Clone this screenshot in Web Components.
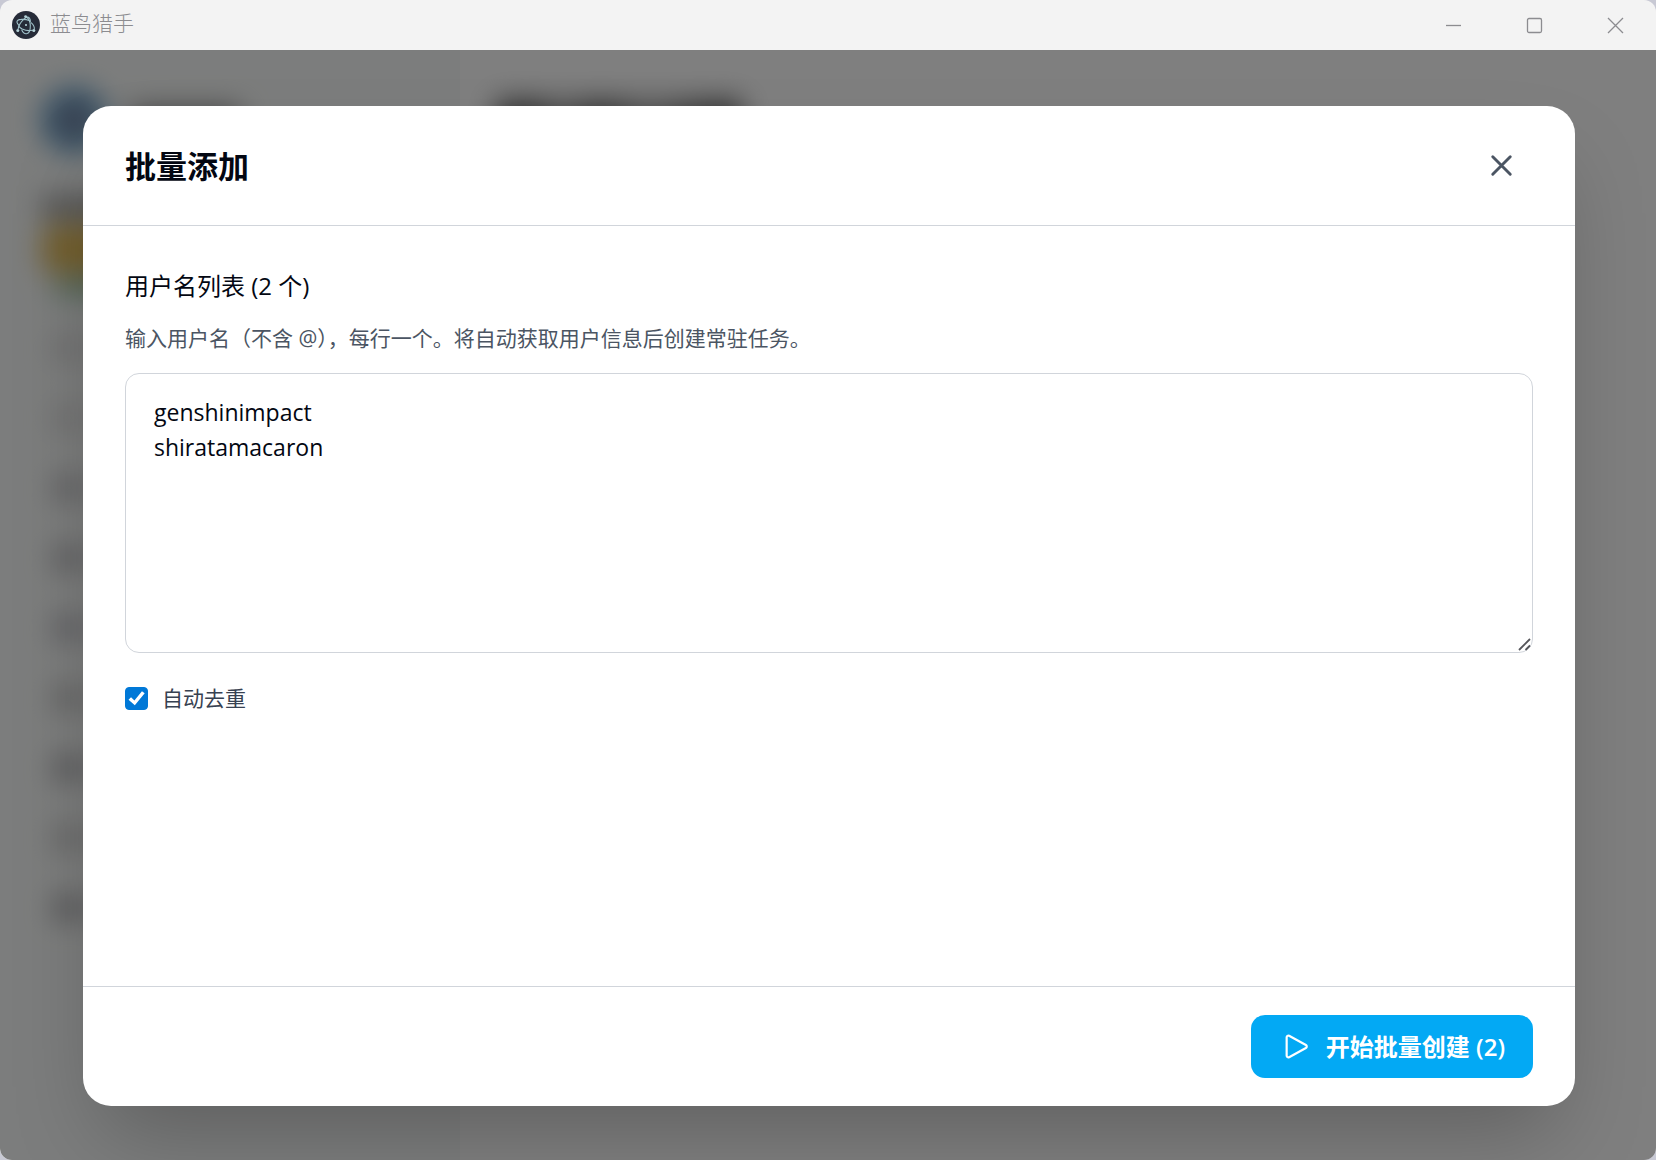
<!DOCTYPE html>
<html lang="zh-CN">
<head>
<meta charset="utf-8">
<meta name="viewport" content="width=device-width, initial-scale=1">
<title>蓝鸟猎手</title>
<style>
  html, body {
    margin: 0;
    height: 100%;
  }
  body {
    background: #c8c9d4;
    font-family: "Open Sans", "Noto Sans CJK SC", sans-serif;
    color: #030712;
  }
</style>
</head>
<body>
<app-window>
  <title-bar slot="titlebar">蓝鸟猎手</title-bar>
  <app-shell slot="shell" aria-hidden="true"></app-shell>
  <modal-dialog heading="批量添加">
    <batch-form></batch-form>
    <primary-button slot="footer">开始批量创建 (2)</primary-button>
  </modal-dialog>
</app-window>

<script>
class AppWindow extends HTMLElement {
  constructor() {
    super();
    this.attachShadow({ mode: 'open' });
    this.shadowRoot.innerHTML = `
      <style>
        :host {
          display: grid;
          grid-template-rows: 50px 1fr;
          min-height: 100vh;
          border-radius: 12px;
          overflow: hidden;
        }
        .stage {
          display: grid;
          min-height: 0;
        }
        .stage > * {
          grid-area: 1 / 1;
          display: grid;
          min-width: 0;
        }
        .backdrop {
          z-index: 1;
          box-sizing: border-box;
          padding: 56px 81px 54px 83px;
          background: rgba(0, 0, 0, 0.5);
        }
      </style>
      <slot name="titlebar"></slot>
      <div class="stage">
        <div><slot name="shell"></slot></div>
        <div class="backdrop"><slot></slot></div>
      </div>
    `;
  }
}
customElements.define('app-window', AppWindow);

class TitleBar extends HTMLElement {
  constructor() {
    super();
    this.attachShadow({ mode: 'open' });
    this.shadowRoot.innerHTML = `
      <style>
        :host {
          display: flex;
          align-items: center;
          background: #f3f3f3;
          color: #8c8c90;
          line-height: 28px;
          padding-left: 12px;
        }
        .logo {
          width: 28px;
          height: 28px;
          margin-right: 10px;
        }
        .name {
          flex: 1;
          font-size: 21px;
          font-weight: 300;
          padding-bottom: 4px;
        }
        button {
          display: grid;
          place-items: center;
          width: 81px;
          height: 50px;
          padding: 0;
          border: none;
          background: none;
          color: inherit;
        }
        button:hover { background: #e5e5e5; }
        button svg {
          width: 17px;
          height: 17px;
          fill: none;
          stroke: currentColor;
          stroke-width: 1.3;
        }
      </style>
      <svg class="logo" viewBox="0 0 28 28" aria-hidden="true">
        <circle cx="14" cy="14" r="14" fill="#262b38"/>
        <g fill="none" stroke="#9fc0c8" stroke-width="1.1" stroke-linecap="round">
          <path d="M18 9.8C15.2 8.7 12 8.2 9.2 8.4C6.3 8.5 4.6 9.6 5 11.3C5.2 12.3 5.9 13.3 7 14.4"/>
          <path d="M6.2 17.6C6.7 14.6 8.8 11 11.6 8.3C13.8 6.2 16 5.6 17.3 6.9C18.1 7.7 18.4 9 18.3 10.6"/>
          <path d="M20.4 19.2C17.6 20 13.6 19.6 10.2 18C8.8 17.3 7.6 16.4 6.8 15.4"/>
          <path d="M14.8 6.2C16.9 7.9 18.2 11 18.3 14.4C18.4 18.6 17 22.2 14.6 22.7C12.6 23 10.8 21.4 9.8 19"/>
          <path d="M22.3 18.2C22.6 16.4 21.5 14 19.4 11.9"/>
        </g>
        <g fill="#b4d2d8">
          <circle cx="14" cy="14" r="1.1"/>
          <circle cx="13.6" cy="5.6" r="1.4"/>
          <circle cx="5.8" cy="19.4" r="1.5"/>
          <circle cx="21.8" cy="19.4" r="1.5"/>
        </g>
      </svg>
      <span class="name"><slot></slot></span>
      <button type="button" aria-label="最小化">
        <svg viewBox="0 0 17 17"><path d="M1 8.5h15"/></svg>
      </button>
      <button type="button" aria-label="最大化">
        <svg viewBox="0 0 17 17"><rect x="1.5" y="1.5" width="14" height="14" rx="1.5"/></svg>
      </button>
      <button type="button" aria-label="关闭窗口">
        <svg viewBox="0 0 17 17"><path d="M1 1l15 15M16 1L1 16"/></svg>
      </button>
    `;
  }
}
customElements.define('title-bar', TitleBar);

// page behind the dialog, out of focus while the dialog is open
class AppShell extends HTMLElement {
  constructor() {
    super();
    this.attachShadow({ mode: 'open' });
    const tones = ['#d8d8d8', '#dadada', '#b8b8bc', '#b0b0b4', '#b4b4bc', '#bcbcbc', '#a4a4a8', '#c4c4c4', '#a0a0a4'];
    this.shadowRoot.innerHTML = `
      <style>
        :host {
          display: grid;
          grid-template-columns: 460px 1fr;
          background: #fff;
          overflow: hidden;
        }
        aside {
          background: #f9fbfa;
          box-sizing: border-box;
          padding: 42px 42px 0;
        }
        main { padding: 50px 36px; }
        .soft { filter: blur(14px); }
        .brand {
          display: flex;
          align-items: center;
          gap: 24px;
          height: 56px;
        }
        .brand i {
          width: 64px;
          height: 64px;
          border-radius: 32px;
          background: radial-gradient(#a88088, #4a98cc 60%);
        }
        .brand b {
          width: 110px;
          height: 24px;
          background: #888;
        }
        .caption {
          width: 90px;
          height: 20px;
          margin-top: 49px;
          background: #999;
        }
        .notice {
          height: 48px;
          margin-top: 8px;
          border-radius: 12px;
          background: #e4bc58;
        }
        .status {
          height: 16px;
          margin: 6px 0 18px 14px;
          background: #8fbe98;
        }
        .item {
          display: flex;
          align-items: center;
          gap: 14px;
          height: 70px;
          padding-left: 12px;
        }
        .item i {
          width: 28px;
          height: 28px;
          border-radius: 14px;
          background: var(--tone);
        }
        .item b {
          width: 120px;
          height: 20px;
          background: var(--tone);
        }
        h1 {
          width: 246px;
          height: 40px;
          margin: 0;
          background: linear-gradient(90deg, #666 16%, #aaa 26%, #666 42%, #aaa 62%, #666 88%);
        }
      </style>
      <aside>
        <div class="soft">
          <div class="brand"><i></i><b></b></div>
          <div class="caption"></div>
          <div class="notice"></div>
          <div class="status"></div>
          ${tones.map(t => `<div class="item" style="--tone: ${t}"><i></i><b></b></div>`).join('')}
        </div>
      </aside>
      <main><div class="soft"><h1></h1></div></main>
    `;
  }
}
customElements.define('app-shell', AppShell);

class ModalDialog extends HTMLElement {
  constructor() {
    super();
    this.attachShadow({ mode: 'open' });
  }

  connectedCallback() {
    this.render();
    this.shadowRoot.querySelector('.close').addEventListener('click', () => {
      this.dispatchEvent(new CustomEvent('close'));
    });
  }

  render() {
    this.shadowRoot.innerHTML = `
      <style>
        :host { display: grid; }
        section {
          display: flex;
          flex-direction: column;
          border-radius: 28px;
          background: #fff;
          box-shadow: 0 44px 88px -21px rgba(0, 0, 0, 0.25);
        }
        header, footer {
          display: flex;
          align-items: center;
          box-sizing: border-box;
          height: 120px;
          padding: 0 42px;
        }
        header {
          justify-content: space-between;
          border-bottom: 1px solid #d1d5db;
        }
        footer {
          justify-content: flex-end;
          border-top: 1px solid #d1d5db;
        }
        h2 {
          margin: 0;
          font-size: 31px;
          line-height: 42px;
          font-weight: 700;
        }
        .close {
          display: grid;
          place-items: center;
          width: 63px;
          height: 63px;
          padding: 0;
          border: none;
          border-radius: 32px;
          background: none;
          color: #4b5563;
          cursor: pointer;
        }
        .close:hover { background: #f3f4f6; }
        .close svg {
          width: 35px;
          height: 35px;
        }
        .body {
          flex: 1;
          padding: 42px;
        }
      </style>
      <section role="dialog" aria-modal="true" aria-labelledby="heading">
        <header>
          <h2 id="heading">${this.getAttribute('heading')}</h2>
          <button class="close" type="button" aria-label="关闭">
            <svg viewBox="0 0 24 24" fill="none" stroke="currentColor" stroke-width="2" stroke-linecap="round"><path d="M6 18L18 6M6 6l12 12"/></svg>
          </button>
        </header>
        <div class="body"><slot></slot></div>
        <footer><slot name="footer"></slot></footer>
      </section>
    `;
  }
}
customElements.define('modal-dialog', ModalDialog);

class BatchForm extends HTMLElement {
  constructor() {
    super();
    this.attachShadow({ mode: 'open' });
    this.names = ['genshinimpact', 'shiratamacaron'];
  }

  connectedCallback() {
    this.render();
    const area = this.shadowRoot.querySelector('textarea');
    area.addEventListener('input', () => {
      this.names = area.value.split('\n').filter(n => n.trim());
      this.shadowRoot.querySelector('.title').textContent = this.label();
    });
  }

  label() {
    return `用户名列表 (${this.names.length} 个)`;
  }

  render() {
    this.shadowRoot.innerHTML = `
      <style>
        :host {
          display: flex;
          flex-direction: column;
        }
        .title {
          font-size: 24px;
          line-height: 35px;
        }
        .hint {
          margin: 21px 0;
          font-size: 21px;
          line-height: 28px;
          color: #4b5563;
        }
        .field {
          position: relative;
          display: grid;
        }
        textarea {
          box-sizing: border-box;
          width: 100%;
          height: 280px;
          padding: 21px 28px;
          border: 1px solid #d1d5db;
          border-radius: 14px;
          background: #fff;
          color: inherit;
          font: inherit;
          font-size: 23px;
          line-height: 35px;
          resize: vertical;
          outline: none;
        }
        textarea::-webkit-resizer { background: transparent; }
        .grip {
          position: absolute;
          right: 2px;
          bottom: 2px;
          width: 14px;
          height: 14px;
          pointer-events: none;
        }
        .option {
          display: flex;
          align-items: center;
          gap: 14px;
          margin-top: 28px;
          font-size: 21px;
          line-height: 35px;
          color: #374151;
        }
        .option input {
          appearance: none;
          display: grid;
          width: 23px;
          height: 23px;
          margin: 0;
          border: 1px solid #767676;
          border-radius: 4px;
        }
        .option input:checked {
          border-color: #0078d7;
          background: #0078d7;
        }
        .option input:checked::before {
          content: "";
          background: #fff;
          clip-path: polygon(12% 56%, 24% 44%, 40% 60%, 76% 15%, 89% 25%, 42% 82%);
        }
      </style>
      <label class="title" for="names">${this.label()}</label>
      <p class="hint" id="hint">输入用户名（不含 @），每行一个。将自动获取用户信息后创建常驻任务。</p>
      <div class="field">
        <textarea id="names" aria-describedby="hint" spellcheck="false">${this.names.join('\n')}</textarea>
        <svg class="grip" viewBox="0 0 14 14" fill="none" stroke="#55555a" stroke-width="1.8" aria-hidden="true"><path d="M2 13L13 2M8.5 13L13 8.5"/></svg>
      </div>
      <div class="option">
        <input type="checkbox" id="dedupe" checked>
        <label for="dedupe">自动去重</label>
      </div>
    `;
  }
}
customElements.define('batch-form', BatchForm);

class PrimaryButton extends HTMLElement {
  constructor() {
    super();
    this.attachShadow({ mode: 'open' });
    this.shadowRoot.innerHTML = `
      <style>
        :host { display: block; }
        button {
          display: flex;
          align-items: center;
          gap: 12px;
          height: 63px;
          padding: 0 28px;
          border: none;
          border-radius: 14px;
          background: #03a9f4;
          color: #fff;
          font: inherit;
          font-size: 24px;
          line-height: 35px;
          font-weight: 600;
          cursor: pointer;
        }
        button:hover { background: #039be5; }
        svg {
          width: 35px;
          height: 35px;
        }
      </style>
      <button type="button">
        <svg viewBox="0 0 24 24" fill="none" stroke="currentColor" stroke-width="1.5" stroke-linejoin="round" aria-hidden="true"><path d="M5.25 5.653c0-.856.917-1.398 1.667-.986l11.54 6.348a1.125 1.125 0 0 1 0 1.971l-11.54 6.347a1.125 1.125 0 0 1-1.667-.985V5.653Z"/></svg>
        <slot></slot>
      </button>
    `;
  }
}
customElements.define('primary-button', PrimaryButton);
</script>
</body>
</html>
